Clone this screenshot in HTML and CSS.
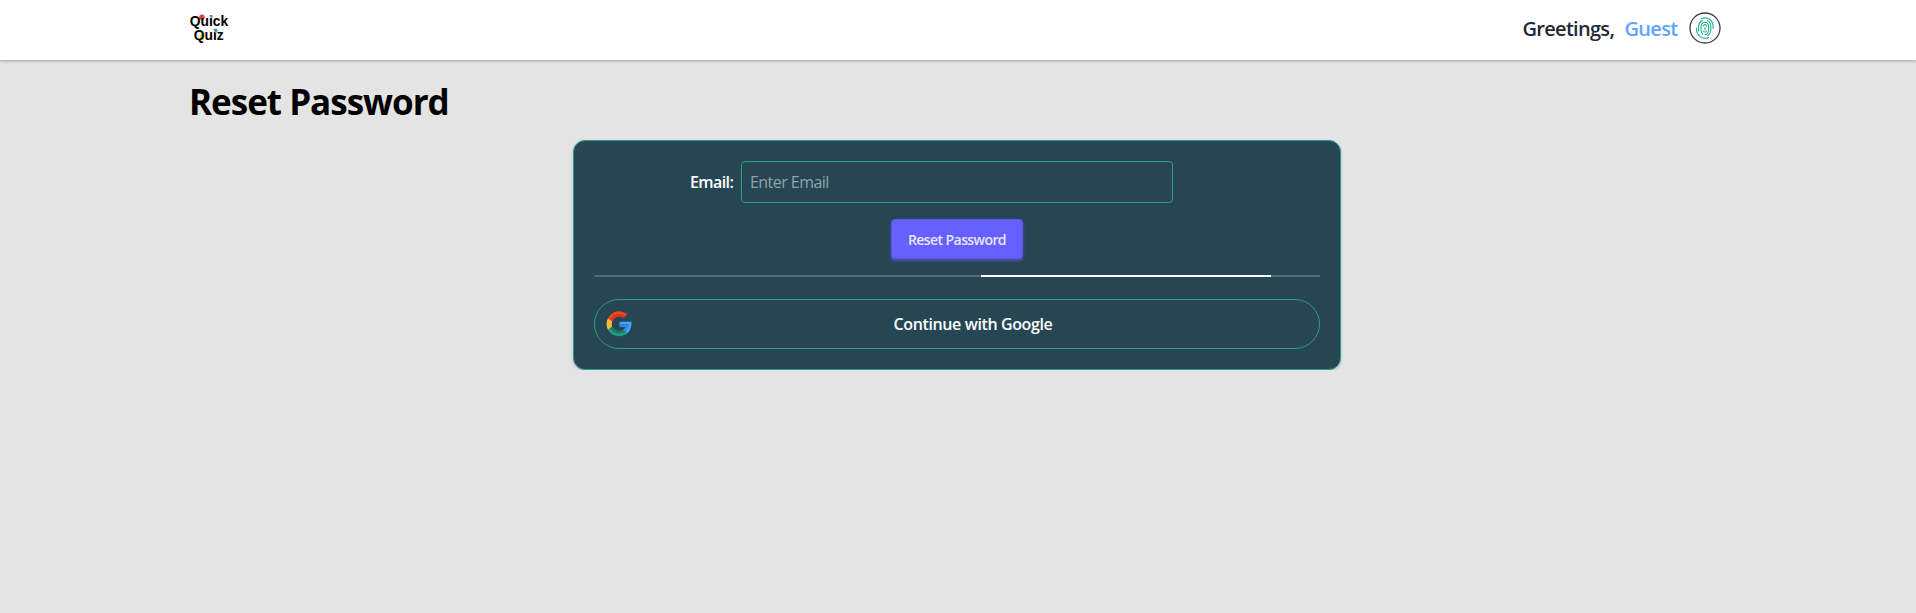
FILE: index.html
```html
<!DOCTYPE html>
<html lang="en">
<head>
<meta charset="utf-8">
<title>Quick Quiz</title>
<link rel="stylesheet" href="styles.css">
</head>
<body>
<header class="header">
  <div class="wrap header-row">
    <svg class="logo" width="40" height="40" viewBox="0 0 40 40" aria-label="Quick Quiz">
      <circle cx="12" cy="9.3" r="2.7" fill="#e63c2e"/>
      <path d="M9 26.5L14.5 27L14 32.5L10 31.5Z" fill="#f4d94e"/>
      <text x="-0.3" y="18" textLength="38.5" lengthAdjust="spacingAndGlyphs">Quick</text>
      <text x="3.8" y="31.8" textLength="30" lengthAdjust="spacingAndGlyphs">Quiz</text>
      <circle cx="21.4" cy="8.4" r="1.4" fill="#5b9bea"/>
      <circle cx="25.8" cy="22.4" r="1.8" fill="#4a90e2"/>
      <circle cx="25.8" cy="23.7" r="1.1" fill="#62b34a"/>
    </svg>
    <div class="user">
      <span class="greeting">Greetings,</span>
      <span class="guest">Guest</span>
      <svg class="avatar" width="32" height="32" viewBox="0 0 32 32" fill="none">
        <circle cx="16" cy="16" r="15" stroke="#3c3a52" stroke-width="1.3"/>
        <g stroke="#2bb596" stroke-width="1.15" stroke-linecap="round">
          <path d="M12 7Q16 4.6 20 7Q24.7 9.5 24.2 16.5"/>
          <path d="M7.5 16Q7.3 21.5 10.7 24.3Q15 27.5 19.5 25.6"/>
          <path d="M9.6 19V14Q10 10 13.2 8.6M18.6 8.8Q21.8 10.3 21.8 15V18.5Q21.3 22 18.8 23.6"/>
          <path d="M13.6 22.2Q12 20.5 12 17V14.5Q12.3 10.3 16 10.2Q19.5 10.4 19.6 14.5V18.5Q19.2 22.2 16 22.6"/>
          <path d="M14.2 13.8Q16 11.5 17.6 13.8M16 15.2V18M14.2 19Q16 21.2 17.6 19"/>
        </g>
      </svg>
    </div>
  </div>
</header>
<main class="wrap">
  <h1 class="title">Reset Password</h1>
  <section class="card">
    <form class="form">
      <div class="field">
        <label class="label" for="email">Email:</label>
        <input class="input" id="email" type="email" placeholder="Enter Email">
      </div>
      <button class="submit" type="button">Reset Password</button>
    </form>
    <div class="progress"><div class="progress-bar"></div></div>
    <button class="google" type="button">
      <svg class="google-icon" width="26" height="26" viewBox="0 0 26 26">
        <path d="M2 7.2A12.8 12.8 0 0 0 2 18.9L6.2 15.8A7.6 7.6 0 0 1 6.4 10.2Z" fill="#ffb83d"/>
        <path d="M2 7.2A12.8 12.8 0 0 1 21.2 3L18 6.8A7.6 7.6 0 0 0 6.4 10.2Z" fill="#f14723"/>
        <path d="M6.4 10.2A7.5 7.5 0 0 1 18 6.8L19.6 5A10.2 10.2 0 0 0 4.3 8.8Z" fill="#d9331f"/>
        <path d="M2 18.9A12.8 12.8 0 0 0 21.4 22.2L17.2 18.7A7.6 7.6 0 0 1 6.2 15.8Z" fill="#219d81"/>
        <path d="M6.2 15.8A7.6 7.6 0 0 0 17.2 18.7L19.3 20.4A10.2 10.2 0 0 1 4.2 17.3Z" fill="#167b66"/>
        <path d="M13.6 10.7H25.5Q26 18 21.4 22.2L17.2 18.7Q19 17.5 19.7 15.7H13.6Z" fill="#42a5f5"/>
        <path d="M13.6 13.1H22.9Q22.5 17.6 19.3 20.4L17.2 18.7Q19 17.5 19.7 15.7H13.6Z" fill="#3183eb"/>
      </svg>
      <span class="google-text">Continue with Google</span>
    </button>
  </section>
</main>
</body>
</html>
```

FILE: styles.css
```css
* { box-sizing: border-box; }
body {
  margin: 0;
  padding-right: 2px;
  background: #e4e4e4;
  color: #000;
  font: 16px/24px "Segoe UI", "Open Sans", "Noto Sans", sans-serif;
}
.wrap { width: 1536px; margin: 0 auto; }
.header {
  height: 60px;
  margin-right: -2px;
  padding-right: 2px;
  background: #fff;
  box-shadow: 0 1px 3px rgba(0, 0, 0, .3);
}
.header-row {
  display: flex;
  justify-content: space-between;
  align-items: flex-start;
  height: 60px;
  padding: 8px 4px 0 1px;
}
.logo { overflow: visible; }
.logo text { font: bold 14.5px "Liberation Sans", Arial, sans-serif; }
.user { display: flex; align-items: flex-start; padding-top: 4px; font-size: 20px; line-height: 34px; }
.greeting { width: 102px; color: #1f2937; font-weight: 600; letter-spacing: -.7px; }
.guest { width: 64.5px; color: #60a5fa; font-weight: 600; letter-spacing: -.7px; }
.title { margin: 22px 0 18px; font-size: 35px; font-weight: 700; line-height: 40px; letter-spacing: -1px; }
.card {
  width: 768px;
  height: 230px;
  margin: 0 auto;
  padding: 20px;
  border: 1px solid #2a9d8f;
  border-radius: 12px;
  background: #264653;
  box-shadow: 0 1px 3px rgba(0, 0, 0, .2);
}
.form { display: flex; flex-direction: column; align-items: center; gap: 16px; }
.field { display: flex; align-items: center; align-self: stretch; padding-left: 96px; }
.label { width: 51px; color: #fff; font-weight: 600; letter-spacing: -.6px; }
.input {
  width: 432px;
  height: 42px;
  padding: 0 8px;
  border: 1px solid #2a9d8f;
  border-radius: 4px;
  background: transparent;
  color: #fff;
  font: inherit;
  letter-spacing: -.55px;
}
.input::placeholder { color: #91a2aa; opacity: 1; }
.submit {
  width: 132px;
  height: 40px;
  padding: 1px 0 0;
  border: 1px solid #5d57e5;
  border-radius: 4px;
  background: #6560ff;
  box-shadow: 0 2px 3px rgba(101, 96, 255, .5);
  color: #e7e7ff;
  font: 600 14px/20px "Segoe UI", "Open Sans", "Noto Sans", sans-serif;
  letter-spacing: -.58px;
}
.progress { height: 2px; margin: 16px 0 22px; border-radius: 1px; background: #516b75; }
.progress-bar { width: 290px; height: 2px; margin-left: 387px; background: #f5fafa; }
.google {
  display: flex;
  align-items: center;
  width: 100%;
  height: 50px;
  padding: 0 5px 0 11px;
  border: 1px solid #2a9d8f;
  border-radius: 25px;
  background: transparent;
  color: #fff;
  font: inherit;
  font-weight: 600;
  letter-spacing: -.38px;
}
.google-text { flex: 1; text-align: center; }
```
